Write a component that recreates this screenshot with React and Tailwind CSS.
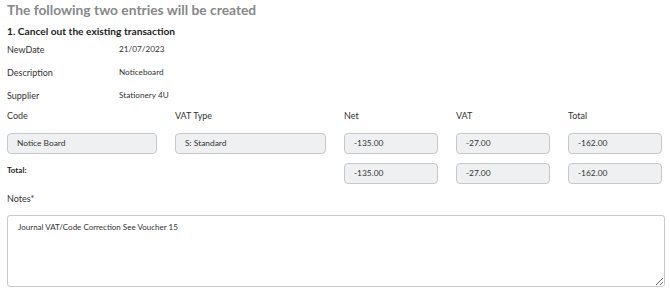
import React from 'react';

const font = { fontFamily: 'Lato, "Noto Sans", sans-serif' };

const InfoRow = ({ label, value }) => (
  <div className="flex items-center h-[23px]">
    <div className="w-[112px] text-[9px] text-[#333]">{label}</div>
    <div className="text-[8.2px] text-[#333]">{value}</div>
  </div>
);

const Field = ({ value }) => (
  <div className="h-[21px] rounded-[4px] border border-[#c6c8ca] bg-[#eef0f1] px-[9px] flex items-center text-[8.4px] text-[#333]">
    {value}
  </div>
);

const ColLabel = ({ children }) => (
  <div className="h-[26px] text-[9px] leading-[18px] text-[#333]">{children}</div>
);

export default function App() {
  return (
    <div className="w-[670px] h-[292px] bg-white px-[7px] overflow-hidden" style={font}>
      <h1 className="text-[13.8px] font-bold text-[#86888a] leading-[20px]">The following two entries will be created</h1>
      <h2 className="text-[10.2px] font-bold text-[#1d1d1d] leading-[14px] mt-[4px]">1. Cancel out the existing transaction</h2>

      <div>
        <InfoRow label="NewDate" value="21/07/2023" />
        <InfoRow label="Description" value="Noticeboard" />
        <InfoRow label="Supplier" value="Stationery 4U" />
      </div>

      {/* Lines grid */}
      <div className="grid grid-cols-[150px_151px_94px_94px_94px] gap-x-[18px]">
        <ColLabel>Code</ColLabel>
        <ColLabel>VAT Type</ColLabel>
        <ColLabel>Net</ColLabel>
        <ColLabel>VAT</ColLabel>
        <ColLabel>Total</ColLabel>

        <Field value="Notice Board" />
        <Field value="S: Standard" />
        <Field value="-135.00" />
        <Field value="-27.00" />
        <Field value="-162.00" />

        <div className="text-[8px] font-bold text-[#1d1d1d] mt-[10px] leading-[12px]">Total:</div>
        <div />
        <div className="mt-[9px]"><Field value="-135.00" /></div>
        <div className="mt-[9px]"><Field value="-27.00" /></div>
        <div className="mt-[9px]"><Field value="-162.00" /></div>
      </div>

      <div className="text-[9px] text-[#333] mt-[8px] leading-[14px]">Notes*</div>
      <textarea
        className="mt-[9px] w-[658px] h-[72px] rounded-[3px] border border-[#c8c8c8] bg-white px-[10px] py-[4px] text-[8px] leading-[14px] text-[#333] outline-none resize-y block"
        style={font}
        defaultValue="Journal VAT/Code Correction See Voucher 15"
      />
    </div>
  );
}
